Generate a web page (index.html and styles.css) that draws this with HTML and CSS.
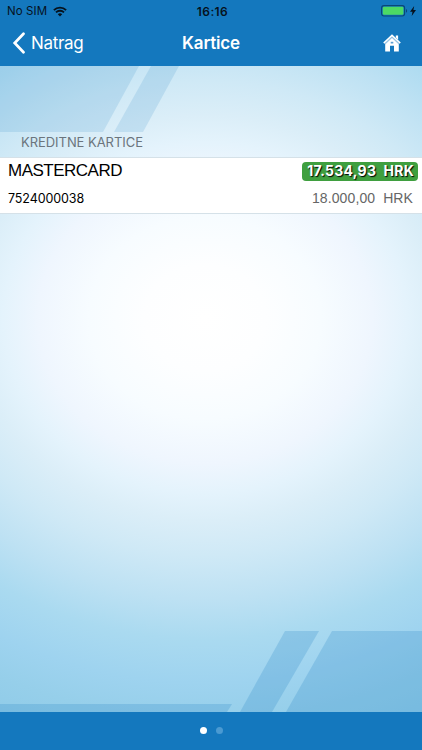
FILE: index.html
```html
<!DOCTYPE html>
<html lang="hr">
<head>
    <meta charset="utf-8">
    <title>Kartice</title>
    <meta name="viewport" content="width=device-width, initial-scale=1">
    <link rel="stylesheet" href="styles.css">
</head>
<body>
    <div class="app">
        <header class="header">
            <div class="status">
                <div class="carrier">
                    <span>No SIM</span>
                    <svg class="wifi" viewBox="0 0 14 11" width="14" height="11">
                        <path d="M.9 4.1a8.7 8.7 0 0 1 12.2 0M3 6.4a5.7 5.7 0 0 1 8 0" fill="none" stroke="#06121d" stroke-width="1.9"/>
                        <path d="M4.8 8.2a3.2 3.2 0 0 1 4.4 0L7 10.5z" fill="#06121d"/>
                    </svg>
                </div>
                <span class="time">16:16</span>
                <div class="power">
                    <svg class="battery" viewBox="0 0 27 12" width="27" height="12">
                        <rect x=".6" y=".6" width="23" height="10.4" rx="2.4" fill="none" stroke="#0a4678" stroke-width="1.1"/>
                        <rect x="1.8" y="1.8" width="20.6" height="8" rx="1.2" fill="#4cd964"/>
                        <path d="M25 4v3.8c1.5-.6 1.5-3.2 0-3.8z" fill="#0a4678"/>
                    </svg>
                    <svg class="bolt" viewBox="0 0 6 10" width="6" height="10">
                        <path d="M4.2 0 0 5.7h2.500L1.700 10 6 4.100H3.400z" fill="#06121d"/>
                    </svg>
                </div>
            </div>
            <nav class="nav">
                <a class="back">
                    <svg viewBox="0 0 14 22" width="14" height="22">
                        <path d="M11.500 1.700 2.700 11l8.800 9.300" fill="none" stroke="#fff" stroke-width="2.700" stroke-linecap="round"/>
                    </svg>
                    <span>Natrag</span>
                </a>
                <h1 class="title">Kartice</h1>
                <a class="home">
                    <svg viewBox="0 0 18 18" width="18" height="18">
                        <path d="M2.200 9.500 9 3.100l6.800 6.400v8H11v-5.700H7v5.700H2.200z" fill="#fff"/>
                        <path d="M12.800 1.500h2.300v4.300l-2.300-2.200z" fill="#fff"/>
                        <path d="M.8 9.200 9 1.500l8.200 7.700" fill="none" stroke="#fff" stroke-width="1.700"/>
                        <path d="M2.400 9.800 9 3.600l6.600 6.200" fill="none" stroke="#77b0dc" stroke-width=".7"/>
                        <rect x="7.700" y="7.800" width="2.600" height="1.700" fill="#5a9fd4"/>
                    </svg>
                </a>
            </nav>
        </header>

        <main class="content">
            <svg class="stripes" viewBox="0 0 422 646" width="422" height="646">
                <g class="stripes-top">
                    <path d="M0 0h139l-36 66H0z"/>
                    <path d="M151 0h28l-36 66h-29z"/>
                </g>
                <g class="stripes-bottom">
                    <path d="M0 638h232l-5 8H0z"/>
                    <path d="M285 565h34l-47 81h-32z"/>
                    <path d="M332 565h90v81H286z"/>
                </g>
            </svg>
            <section class="group">
                <h2 class="group-title">KREDITNE KARTICE</h2>
                <div class="card">
                    <div class="row">
                        <span class="name">MASTERCARD</span>
                        <span class="badge">17.534,93&nbsp; HRK</span>
                    </div>
                    <div class="row">
                        <span class="number">7524000038</span>
                        <span class="limit">18.000,00&nbsp; HRK</span>
                    </div>
                </div>
            </section>
        </main>

        <footer class="footer">
            <span class="dot active"></span>
            <span class="dot"></span>
        </footer>
    </div>
</body>
</html>
```
FILE: styles.css
```css
* {
    margin: 0;
    padding: 0;
    box-sizing: border-box;
}

body {
    font-family: Inter, "Liberation Sans", sans-serif;
    background: #1478be;
}

.app {
    width: 422px;
    height: 750px;
    display: flex;
    flex-direction: column;
    overflow: hidden;
}

/* header */
.header {
    height: 66px;
    background: #1478be;
}

.status {
    height: 22px;
    display: grid;
    grid-template-columns: 1fr auto 1fr;
    align-items: center;
    padding: 0 6px 0 7px;
    color: #06121d;
    font-size: 11.5px;
}

.carrier {
    display: flex;
    align-items: center;
    gap: 6px;
    letter-spacing: 0.1px;
}

.time {
    padding-left: 2px;
    font-size: 12px;
    font-weight: 600;
    letter-spacing: 0.4px;
}

.power {
    display: flex;
    align-items: center;
    justify-content: flex-end;
    gap: 2px;
}

.nav {
    height: 44px;
    display: grid;
    grid-template-columns: 1fr auto 1fr;
    align-items: center;
    padding: 0 12px 2px;
    color: #fff;
}

.back {
    display: flex;
    align-items: center;
    gap: 5px;
    font-size: 17px;
    letter-spacing: -0.3px;
}

.title {
    font-size: 17px;
    font-weight: 600;
    letter-spacing: -0.2px;
}

.home {
    display: flex;
    justify-content: flex-end;
    padding-right: 9px;
}

/* content */
.content {
    position: relative;
    flex: 1;
    background: radial-gradient(ellipse 506px 440px at 205px 252px,
        #fff 0%, #fdfeff 12%, #f7fcff 23%, #eff6fe 33%, #e4f3fc 40%,
        #dbeef8 46%, #cfe9f6 54%, #bde1f3 64%, #aadaf0 73%,
        #9ed3ef 83%, #96cfea 91%, #8fcbe8 100%);
}

.stripes {
    position: absolute;
    top: 0;
    left: 0;
}

.stripes-top {
    fill: #2a86c6;
    opacity: 0.15;
}

.stripes-bottom {
    fill: #2a86c6;
    opacity: 0.23;
}

.group {
    position: relative;
}

.group-title {
    height: 91px;
    padding: 67px 0 0 21px;
    color: #6b757d;
    font-size: 13px;
    line-height: 18px;
    font-weight: 400;
    letter-spacing: -0.05px;
}

.card {
    height: 57px;
    padding: 4px 4px 0 8px;
    background: #fff;
    border-top: 1px solid #d5e1e8;
    border-bottom: 1px solid #d5e1e8;
}

.row {
    display: flex;
    align-items: center;
    justify-content: space-between;
    height: 18px;
}

.row + .row {
    margin-top: 9px;
}

.name {
    color: #000;
    font-family: "Liberation Sans", sans-serif;
    font-size: 17px;
    line-height: 18px;
    letter-spacing: -0.5px;
}

.badge {
    height: 19px;
    padding: 0 4px 0 5px;
    background: #3f9f3f;
    border-radius: 4px;
    color: #fff;
    font-size: 14px;
    font-weight: 700;
    line-height: 18px;
    letter-spacing: 0.27px;
    text-shadow: 1px 1px 1px #000;
}

.number {
    color: #000;
    font-size: 12.5px;
    letter-spacing: -0.1px;
}

.limit {
    padding-right: 5px;
    color: #666;
    font-family: "Liberation Sans", sans-serif;
    font-size: 14px;
    letter-spacing: 0.1px;
}

/* footer */
.footer {
    height: 38px;
    display: flex;
    justify-content: center;
    gap: 9px;
    padding-top: 15px;
    background: #1478be;
}

.dot {
    width: 7px;
    height: 7px;
    border-radius: 50%;
    background: #4a9ad2;
}

.dot.active {
    background: #fff;
}
```
